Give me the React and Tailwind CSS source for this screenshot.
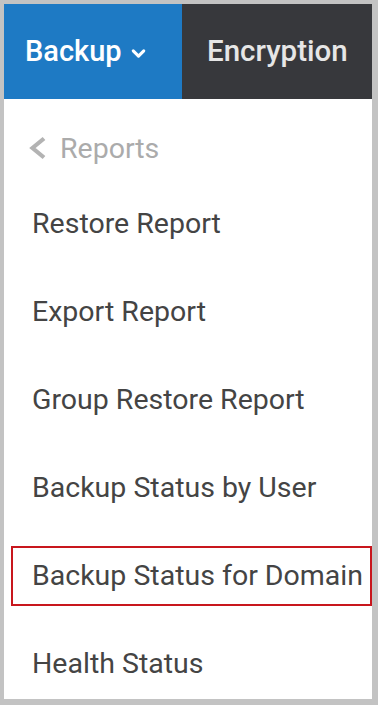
import { ChevronDown } from "lucide-react";

const items = [
  "Restore Report",
  "Export Report",
  "Group Restore Report",
  "Backup Status by User",
];

const App = () => {
  return (
    <div className="h-[705px] w-[378px] bg-[#c3c3c3] pb-[6px] pl-[4px] pr-[6px] pt-[4px] font-['Roboto',sans-serif]">
      <div className="flex h-full flex-col overflow-hidden bg-white">
        {/* Top tabs */}
        <div className="flex h-[95px] shrink-0">
          <div className="flex w-[178px] items-center bg-[#1e7ac4] pl-[21px] text-[29px] font-medium text-white">
            <span>Backup</span>
            <ChevronDown size={21} strokeWidth={3.5} className="ml-[6px] mt-[3px]" />
          </div>
          <div className="flex flex-1 items-center bg-[#37383c] pl-[25px] text-[29.5px] font-medium text-[#e6e6e6]">
            Encryption
          </div>
        </div>

        {/* Menu */}
        <div className="pt-[19px]">
          <div className="flex h-[62px] items-center pl-[25px] text-[28.5px] text-[#ababab]">
            <svg width="17" height="24" viewBox="0 0 17 24" fill="none" className="mt-[-2px]">
              <path d="M15 2.5 L3.5 12 L15 21.5" stroke="#b3b3b3" strokeWidth="4.2" strokeLinejoin="miter" />
            </svg>
            <span className="ml-[14px]">Reports</span>
          </div>
          {items.map((label) => (
            <div
              key={label}
              className="flex h-[88px] items-center pl-[28px] text-[28.5px] text-[#444444]"
            >
              {label}
            </div>
          ))}
          <div className="flex h-[88px] items-center">
            <div className="ml-[7px] flex h-[60px] flex-1 items-center border-2 border-[#c8161d] pl-[19px] text-[28.5px] text-[#444444]">
              Backup Status for Domain
            </div>
          </div>
          <div className="flex h-[88px] items-center pl-[28px] text-[28.5px] text-[#444444]">
            Health Status
          </div>
        </div>
      </div>
    </div>
  );
};

export default App;
